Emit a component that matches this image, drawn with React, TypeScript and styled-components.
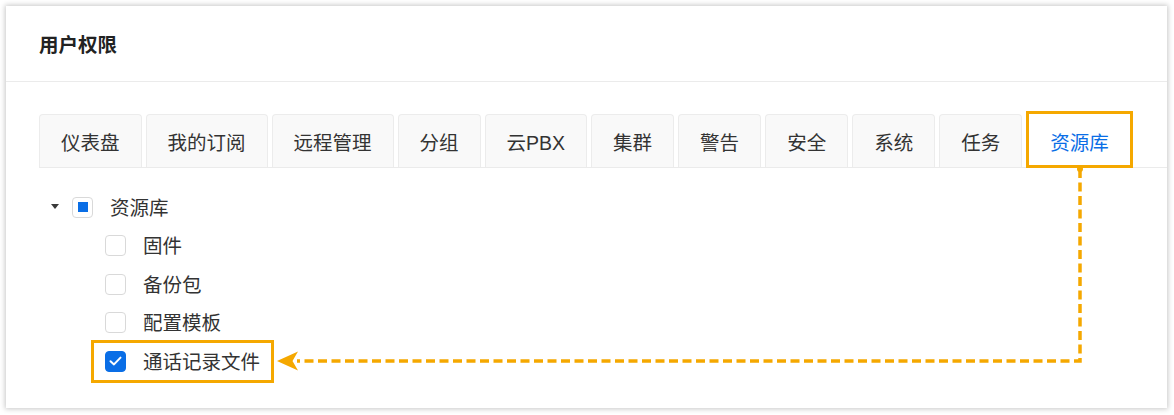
import React from "react";
import styled, { createGlobalStyle, css } from "styled-components";

const ORANGE = "#f5a800";
const BLUE = "#0a6ee6";

const Global = createGlobalStyle`
  html, body { margin: 0; padding: 0; background: #ffffff; }
  body { font-family: "Liberation Sans", "Noto Sans CJK SC", sans-serif; color: #333; }
`;

const Page = styled.div`
  padding: 6px 7px 7px 6px;
`;

const Card = styled.div`
  position: relative;
  width: 1161px;
  height: 402px;
  background: #fff;
  box-shadow: 0 0 5px 1px rgba(0, 0, 0, 0.22);
  display: flex;
  flex-direction: column;
`;

const Header = styled.div`
  height: 76px;
  display: flex;
  align-items: center;
  padding: 0 0 0 33px;
  border-bottom: 1px solid #ebebeb;
  box-sizing: border-box;
`;

const Title = styled.h1`
  margin: 0;
  font-size: 19.5px;
  font-weight: 700;
  color: #222;
  line-height: 1;
  transform: translateY(2px);
`;

const Body = styled.div`
  padding: 32px 0 0 33px;
`;

const TabBar = styled.div`
  display: flex;
  gap: 4px;
  border-bottom: 1px solid #ebebeb;
  height: 54px;
  box-sizing: border-box;
`;

const Tab = styled.div<{ $active?: boolean; $mark?: boolean }>`
  position: relative;
  height: 53px;
  box-sizing: border-box;
  padding: 0 21px;
  display: flex;
  align-items: center;
  font-size: 19.5px;
  color: #333;
  background: #f9f9f9;
  border: 1px solid #ececec;
  border-bottom: none;
  border-radius: 4px 4px 0 0;
  white-space: nowrap;
  ${(p) =>
    p.$active &&
    css`
      margin-left: 2px;
      background: #fff;
      color: ${BLUE};
      border-color: transparent;
    `}
  ${(p) =>
    p.$mark &&
    css`
      &::after {
        content: "";
        position: absolute;
        top: -4px;
        left: -3px;
        right: -3px;
        bottom: -1px;
        border: 3px solid ${ORANGE};
      }
    `}
`;

const Tree = styled.div`
  padding: 20px 0 0 39px;
  display: flex;
  flex-direction: column;
`;

const Row = styled.div<{ $level: number }>`
  height: 38.5px;
  display: flex;
  align-items: center;
  padding-left: ${(p) => p.$level * 33}px;
`;

const Switcher = styled.span`
  width: 27px;
  height: 100%;
  display: flex;
  align-items: center;
  justify-content: flex-start;
  padding-left: 6px;
  box-sizing: border-box;
`;

const Caret = styled.span`
  width: 0;
  height: 0;
  border-left: 4.5px solid transparent;
  border-right: 4.5px solid transparent;
  border-top: 5px solid #3a3a3a;
  margin-top: -1px;
`;

const Node = styled.div<{ $mark?: boolean }>`
  position: relative;
  height: 100%;
  display: flex;
  align-items: center;
  gap: 17px;
  ${(p) =>
    p.$mark &&
    css`
      &::after {
        content: "";
        position: absolute;
        top: -2px;
        bottom: -2px;
        left: -14px;
        right: -14px;
        border: 3px solid ${ORANGE};
      }
    `}
`;

const Box = styled.span<{ $state: "none" | "half" | "checked" }>`
  width: 21px;
  height: 21px;
  box-sizing: border-box;
  border-radius: 4px;
  border: 1px solid #d9d9d9;
  background: #fff;
  display: flex;
  align-items: center;
  justify-content: center;
  ${(p) =>
    p.$state === "half" &&
    css`
      &::before {
        content: "";
        width: 10px;
        height: 10px;
        background: ${BLUE};
      }
    `}
  ${(p) =>
    p.$state === "checked" &&
    css`
      background: ${BLUE};
      border-color: ${BLUE};
    `}
`;

const Label = styled.span`
  font-size: 19.5px;
  color: #333;
  line-height: 1;
  white-space: nowrap;
  transform: translateY(1px);
`;

const Overlay = styled.svg`
  position: absolute;
  left: 0;
  top: 0;
  width: 100%;
  height: 100%;
  pointer-events: none;
  overflow: visible;
`;

const tabs = ["仪表盘", "我的订阅", "远程管理", "分组", "云PBX", "集群", "警告", "安全", "系统", "任务", "资源库"];

const children: { label: string; checked?: boolean }[] = [
  { label: "固件" },
  { label: "备份包" },
  { label: "配置模板" },
  { label: "通话记录文件", checked: true },
];

export default function App() {
  return (
    <>
      <Global />
      <Page>
        <Card>
          <Header>
            <Title>用户权限</Title>
          </Header>
          <Body>
            <TabBar>
              {tabs.map((t, i) => {
                const active = i === tabs.length - 1;
                return (
                  <Tab key={t} $active={active} $mark={active}>
                    {t}
                  </Tab>
                );
              })}
            </TabBar>
          </Body>
          <Tree>
            <Row $level={0}>
              <Switcher>
                <Caret />
              </Switcher>
              <Node>
                <Box $state="half" />
                <Label>资源库</Label>
              </Node>
            </Row>
            {children.map((c) => (
              <Row key={c.label} $level={1}>
                <Switcher />
                <Node $mark={c.checked}>
                  <Box $state={c.checked ? "checked" : "none"}>
                    {c.checked && (
                      <svg width="13" height="10" viewBox="0 0 13 10">
                        <path d="M1.5 5.2 L5 8.4 L11.5 1.6" fill="none" stroke="#fff" strokeWidth="2" strokeLinecap="round" strokeLinejoin="round" />
                      </svg>
                    )}
                  </Box>
                  <Label>{c.label}</Label>
                </Node>
              </Row>
            ))}
          </Tree>
          <Overlay viewBox="0 0 1161 402">
            <circle cx="1074" cy="163" r="3" fill={ORANGE} />
            <path
              d="M1074 163 L1074 355 L291 355"
              fill="none"
              stroke={ORANGE}
              strokeWidth="3.5"
              strokeDasharray="9 4.5"
            />
            <path d="M271 355 L292 345.5 L286.5 355 L292 364.5 Z" fill={ORANGE} />
          </Overlay>
        </Card>
      </Page>
    </>
  );
}
